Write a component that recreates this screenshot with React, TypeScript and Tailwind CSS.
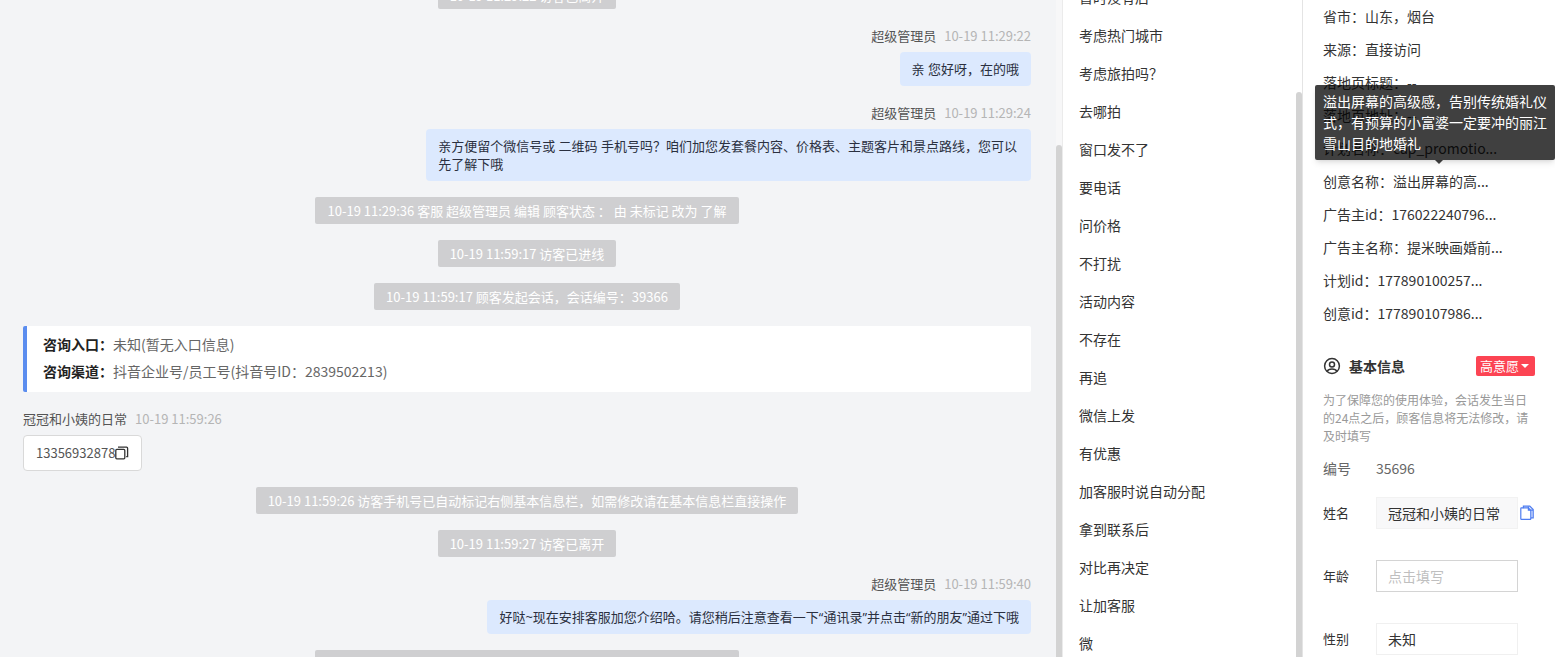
import { useState } from 'react';

interface Message {
  type: 'notice' | 'staff' | 'visitor' | 'entry';
  time?: string;
  text?: string;
}

const messages: Message[] = [
  { type: 'notice', text: '10-19 11:29:22 访客已离开' },
  { type: 'staff', time: '10-19 11:29:22', text: '亲 您好呀，在的哦' },
  {
    type: 'staff',
    time: '10-19 11:29:24',
    text: '亲方便留个微信号或 二维码 手机号吗？咱们加您发套餐内容、价格表、主题客片和景点路线，您可以先了解下哦',
  },
  { type: 'notice', text: '10-19 11:29:36 客服 超级管理员 编辑 顾客状态 ： 由 未标记 改为 了解' },
  { type: 'notice', text: '10-19 11:59:17 访客已进线' },
  { type: 'notice', text: '10-19 11:59:17 顾客发起会话，会话编号：39366' },
  { type: 'entry' },
  { type: 'visitor', time: '10-19 11:59:26', text: '13356932878' },
  { type: 'notice', text: '10-19 11:59:26 访客手机号已自动标记右侧基本信息栏，如需修改请在基本信息栏直接操作' },
  { type: 'notice', text: '10-19 11:59:27 访客已离开' },
  {
    type: 'staff',
    time: '10-19 11:59:40',
    text: '好哒~现在安排客服加您介绍哈。请您稍后注意查看一下“通讯录”并点击“新的朋友”通过下哦',
  },
  { type: 'notice', text: '10-19 12:02:15 客服 超级管理员 编辑 顾客状态 ： 由 了解 改为 未标记' },
];

const quickReplies = [
  '暂时没有后',
  '考虑热门城市',
  '考虑旅拍吗？',
  '去哪拍',
  '窗口发不了',
  '要电话',
  '问价格',
  '不打扰',
  '活动内容',
  '不存在',
  '再追',
  '微信上发',
  '有优惠',
  '加客服时说自动分配',
  '拿到联系后',
  '对比再决定',
  '让加客服',
  '微',
];

const visitInfo = [
  { label: '省市', value: '山东，烟台' },
  { label: '来源', value: '直接访问' },
  { label: '落地页标题', value: '--' },
  { label: '落地页地址', value: '--' },
  { label: '计划名称', value: 'cap_promotio...' },
  {
    label: '创意名称',
    value: '溢出屏幕的高...',
    tip: '溢出屏幕的高级感，告别传统婚礼仪式，有预算的小富婆一定要冲的丽江雪山目的地婚礼',
  },
  { label: '广告主id', value: '176022240796...' },
  { label: '广告主名称', value: '提米映画婚前...' },
  { label: '计划id', value: '177890100257...' },
  { label: '创意id', value: '177890107986...' },
];

function CopyIcon() {
  return (
    <svg width="14" height="14" viewBox="0 0 14 14" fill="none" stroke="#333" strokeWidth="1.3">
      <rect x="0.8" y="3.4" width="9" height="9.4" rx="1" />
      <path d="M3 1.2h8.6a1 1 0 0 1 1 1v8.4h-1.4" />
    </svg>
  );
}

function FileCopyIcon() {
  return (
    <svg width="14" height="16" viewBox="0 0 14 16" fill="none" stroke="#4f7df0" strokeWidth="1.2">
      <path d="M3.4 2.8H1.4a.6.6 0 0 0-.6.6v10.4a.6.6 0 0 0 .6.6h8.8a.6.6 0 0 0 .6-.6v-.9" />
      <path d="M3.4 1.2h6.4l3.4 3.4v8.2H10.8V5.6L8.4 2.8h-5z" fill="#dfe8fd" />
      <path d="M8.4 1.6v3.6h4.6" />
    </svg>
  );
}

function UserIcon() {
  return (
    <svg width="18" height="18" viewBox="0 0 18 18" fill="none" stroke="#333" strokeWidth="1.5">
      <circle cx="9" cy="9" r="7.4" />
      <circle cx="9" cy="7.4" r="2.5" />
      <path d="M4.2 14.2c.7-1.6 2.4-2.3 4.8-2.3s4.1.7 4.8 2.3" />
    </svg>
  );
}

function MessageItem({ message }: { message: Message }) {
  if (message.type === 'notice') {
    return (
      <p className="self-center rounded-xs bg-[#cfcfd1] px-3 pt-[5px] pb-1 text-[13px] leading-[18px] text-white">
        {message.text}
      </p>
    );
  }

  if (message.type === 'entry') {
    return (
      <div className="self-stretch rounded-xs border-l-4 border-[#5b8def] bg-white px-4 pt-[5px] pb-[7px] text-sm leading-[27px] text-[#666]">
        <p>
          <strong className="text-[#222]">咨询入口：</strong>未知(暂无入口信息)
        </p>
        <p>
          <strong className="text-[#222]">咨询渠道：</strong>抖音企业号/员工号(抖音号ID：2839502213)
        </p>
      </div>
    );
  }

  if (message.type === 'visitor') {
    return (
      <div className="flex flex-col items-start gap-[5px] text-[13px]">
        <div className="flex gap-2 leading-[22px]">
          <span className="text-[#555]">冠冠和小姨的日常</span>
          <span className="text-[#b5b5b5]">{message.time}</span>
        </div>
        <div className="flex items-center rounded border border-[#d9d9d9] bg-white px-3 py-2 leading-[18px] text-[#555]">
          {message.text}
          <button type="button" aria-label="复制">
            <CopyIcon />
          </button>
        </div>
      </div>
    );
  }

  return (
    <div className="flex flex-col items-end gap-[5px] text-[13px]">
      <div className="flex gap-2 leading-[22px]">
        <span className="text-[#555]">超级管理员</span>
        <span className="text-[#b5b5b5]">{message.time}</span>
      </div>
      <p className="max-w-[60%] rounded bg-[#dce9fe] px-3 py-2 font-['Open_Sans','Noto_Sans_CJK_SC',sans-serif] leading-[18px] text-[#2b3040]">
        {message.text}
      </p>
    </div>
  );
}

export default function App() {
  const [age, setAge] = useState('');

  return (
    <div className="flex h-screen overflow-hidden bg-white font-['Noto_Sans_CJK_SC',sans-serif] text-sm text-[#333]">
      <main className="flex min-w-0 flex-1 bg-[#f3f4f6]">
        <div className="-mt-[18px] flex min-w-0 flex-1 flex-col gap-4 pr-[25px] pl-[23px]">
          {messages.map((message, i) => (
            <MessageItem key={i} message={message} />
          ))}
        </div>
        <div className="flex w-1.5 shrink-0 bg-[#f7f7f8] pt-[145px]">
          <div className="flex-1 rounded-t-full bg-[#d3d3d3]" />
        </div>
      </main>

      <aside className="flex w-60 shrink-0 border-l border-[#ebebeb]">
        <ul className="-mt-[22px] flex-1 pl-4">
          {quickReplies.map((reply) => (
            <li key={reply} className="leading-[38px]">
              {reply}
            </li>
          ))}
        </ul>
        <div className="flex w-1.5 shrink-0 pt-[92px]">
          <div className="flex-1 rounded-t-full bg-[#d3d3d3]" />
        </div>
      </aside>

      <aside className="w-[253px] shrink-0 border-l border-[#e4e4e4] px-5">
        <div className="leading-[33px]">
          {visitInfo.map((item) => (
            <div key={item.label} className="relative">
              {item.label}：{item.value}
              {item.tip && (
                <div
                  role="tooltip"
                  className="absolute -right-5 bottom-full -left-2 mb-[5px] rounded-xs bg-black/75 px-2 py-1.5 leading-[21px] text-white shadow-md"
                >
                  {item.tip}
                  <span className="absolute top-full left-1/2 border-x-4 border-t-4 border-x-transparent border-t-black/75" />
                </div>
              )}
            </div>
          ))}
        </div>

        <div className="mt-6 flex h-6 items-center">
          <UserIcon />
          <h2 className="ml-2 flex-1 font-bold">基本信息</h2>
          <button
            type="button"
            className="flex h-5 items-center gap-0.5 rounded-xs bg-[#fc4453] px-1 text-[13px] text-white"
          >
            高意愿
            <span className="mr-0.5 border-x-4 border-t-4 border-x-transparent border-t-white" />
          </button>
        </div>
        <p className="mt-[13px] text-xs leading-[18px] text-[#999]">
          为了保障您的使用体验，会话发生当日的24点之后，顾客信息将无法修改，请及时填写
        </p>
        <div className="mt-[13px] flex leading-5 text-[#666]">
          <span className="w-[53px]">编号</span>
          <span>35696</span>
        </div>

        <form className="mt-[19px] flex flex-col gap-[31px]">
          <div className="flex items-center">
            <label htmlFor="name" className="w-[53px] text-[13px]">
              姓名
            </label>
            <input
              id="name"
              type="text"
              readOnly
              value="冠冠和小姨的日常"
              className="h-8 w-[142px] border border-[#f2f2f2] bg-[#f8f8f9] px-[11px]"
            />
            <button type="button" aria-label="复制姓名" className="ml-0.5">
              <FileCopyIcon />
            </button>
          </div>
          <div className="flex items-center">
            <label htmlFor="age" className="w-[53px] text-[13px]">
              年龄
            </label>
            <input
              id="age"
              type="text"
              placeholder="点击填写"
              value={age}
              onChange={(e) => setAge(e.target.value)}
              className="h-8 w-[142px] border border-[#d4d4d4] px-[11px] placeholder:text-[#bfbfbf]"
            />
          </div>
          <div className="flex items-center">
            <label htmlFor="gender" className="w-[53px] text-[13px]">
              性别
            </label>
            <select
              id="gender"
              defaultValue="未知"
              className="h-8 w-[142px] appearance-none border border-[#f0f0f0] bg-white px-[11px]"
            >
              <option>未知</option>
              <option>男</option>
              <option>女</option>
            </select>
          </div>
        </form>
      </aside>
    </div>
  );
}
